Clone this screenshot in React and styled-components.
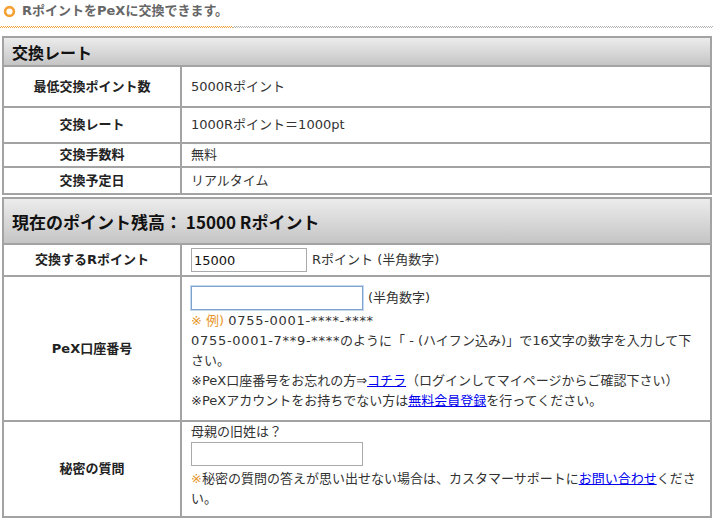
import React from 'react';
import styled, { createGlobalStyle } from 'styled-components';

const GlobalStyle = createGlobalStyle`
  body {
    margin: 0;
    background: #fff;
    font-family: "DejaVu Sans", "Noto Sans CJK JP", sans-serif;
    color: #333;
  }
`;

const Page = styled.div`
  width: 713px;
`;

const TitleBar = styled.div`
  display: flex;
  align-items: center;
  height: 22px;
  padding-left: 3px;
  gap: 6px;
`;

const Title = styled.h2`
  margin: 0;
  font-size: 13px;
  line-height: 22px;
  font-weight: bold;
  color: #666;
`;

const DotLine = styled.div`
  display: flex;
  height: 2px;
  margin-top: 4px;
`;

const Dots = styled.span`
  display: block;
  height: 2px;
  width: ${(p) => (p.$w ? `${p.$w}px` : 'auto')};
  flex: ${(p) => (p.$w ? 'none' : 1)};
  background-image: conic-gradient(${(p) => p.$color} 25%, transparent 0 50%, ${(p) => p.$color} 0 75%, transparent 0);
  background-size: 2px 2px;
`;

const Table = styled.div`
  width: 710px;
  margin-left: 2px;
  margin-top: ${(p) => p.$mt}px;
  border: 2px solid #a3a3a3;
  box-sizing: border-box;
`;

const Header = styled.div`
  display: flex;
  align-items: center;
  height: ${(p) => p.$h}px;
  box-sizing: border-box;
  padding-left: 8px;
  border-bottom: 2px solid #a3a3a3;
  background: linear-gradient(#ececec, #c5c5c5);
  font-family: "Noto Sans CJK JP", sans-serif;
  font-size: ${(p) => p.$size}px;
  font-weight: bold;
  color: #111;
`;

const Row = styled.div`
  display: grid;
  grid-template-columns: 178px 1fr;
  height: ${(p) => (p.$fixed ? `${p.$h}px` : 'auto')};
  min-height: ${(p) => p.$h}px;
  box-sizing: border-box;
  border-bottom: ${(p) => (p.$last ? 'none' : '2px solid #a3a3a3')};
`;

const Label = styled.div`
  display: flex;
  align-items: center;
  justify-content: center;
  border-right: 2px solid #a3a3a3;
  font-size: 13px;
  line-height: 20px;
  font-weight: bold;
  color: #222;
`;

const Value = styled.div`
  display: flex;
  flex-direction: column;
  justify-content: ${(p) => (p.$top ? 'flex-start' : 'center')};
  padding: ${(p) => p.$pad || '0 9px'};
  font-size: 13px;
  line-height: 20px;
  color: #333;
`;

const InputLine = styled.div`
  display: flex;
  align-items: center;
  gap: 5px;
  margin: ${(p) => p.$m || '0'};
`;

const Field = styled.input`
  width: ${(p) => p.$w}px;
  height: 24px;
  box-sizing: border-box;
  border: 1px solid ${(p) => (p.$focus ? '#7da2ce' : '#a9a9a9')};
  box-shadow: ${(p) => (p.$focus ? '0 0 0 1px #c5d9f1' : 'none')};
  padding: 1px 2px;
  font-family: "DejaVu Sans", "Noto Sans CJK JP", sans-serif;
  font-size: 13px;
  color: #111;
  outline: none;
`;

const Note = styled.span`
  color: #e8962a;
`;

const Num = styled.span`
  letter-spacing: 0.7px;
`;

const Link = styled.a`
  color: #0000ee;
  text-decoration: underline;
`;

const Ring = () => (
  <svg width="13" height="13" viewBox="0 0 13 13">
    <circle cx="6.5" cy="6.5" r="4.4" fill="none" stroke="#f4a033" strokeWidth="2.6" />
  </svg>
);

const rates = [
  { label: '最低交換ポイント数', value: '5000Rポイント', h: 41 },
  { label: '交換レート', value: '1000Rポイント＝1000pt', h: 36 },
  { label: '交換手数料', value: '無料', h: 24 },
  { label: '交換予定日', value: 'リアルタイム', h: 25 },
];

export default function App() {
  return (
    <Page>
      <GlobalStyle />
      <TitleBar>
        <Ring />
        <Title>RポイントをPeXに交換できます。</Title>
      </TitleBar>
      <DotLine>
        <Dots $w={233} $color="#f2a33e" />
        <Dots $color="#b5b5b5" />
      </DotLine>

      <Table $mt={8}>
        <Header $h={29} $size={16}>交換レート</Header>
        {rates.map((r, i) => (
          <Row key={r.label} $h={r.h} $fixed $last={i === rates.length - 1}>
            <Label>{r.label}</Label>
            <Value>{r.value}</Value>
          </Row>
        ))}
      </Table>

      <Table $mt={2}>
        <Header $h={46} $size={17}>現在のポイント残高： 15000 Rポイント</Header>
        <Row $h={32} $fixed>
          <Label>交換するRポイント</Label>
          <Value>
            <InputLine>
              <Field $w={116} defaultValue="15000" />
              <span>Rポイント (半角数字)</span>
            </InputLine>
          </Value>
        </Row>
        <Row $h={145}>
          <Label>PeX口座番号</Label>
          <Value $top $pad="9px 9px 8px">
            <InputLine $m="0 0 1px">
              <Field $w={172} $focus />
              <span>(半角数字)</span>
            </InputLine>
            <div><Note>※ 例)</Note> <Num>0755-0001-****-****</Num></div>
            <div><Num>0755-0001-7**9-****</Num>のように「 - (ハイフン込み)」で16文字の数字を入力して下さい。</div>
            <div>※PeX口座番号をお忘れの方⇒<Link href="#">コチラ</Link>（ログインしてマイページからご確認下さい）</div>
            <div>※PeXアカウントをお持ちでない方は<Link href="#">無料会員登録</Link>を行ってください。</div>
          </Value>
        </Row>
        <Row $h={94} $last>
          <Label>秘密の質問</Label>
          <Value $top $pad="0 9px 7px">
            <div>母親の旧姓は？</div>
            <InputLine $m="0 0 3px">
              <Field $w={172} />
            </InputLine>
            <div><Note>※</Note>秘密の質問の答えが思い出せない場合は、カスタマーサポートに<Link href="#">お問い合わせ</Link>ください。</div>
          </Value>
        </Row>
      </Table>
    </Page>
  );
}
